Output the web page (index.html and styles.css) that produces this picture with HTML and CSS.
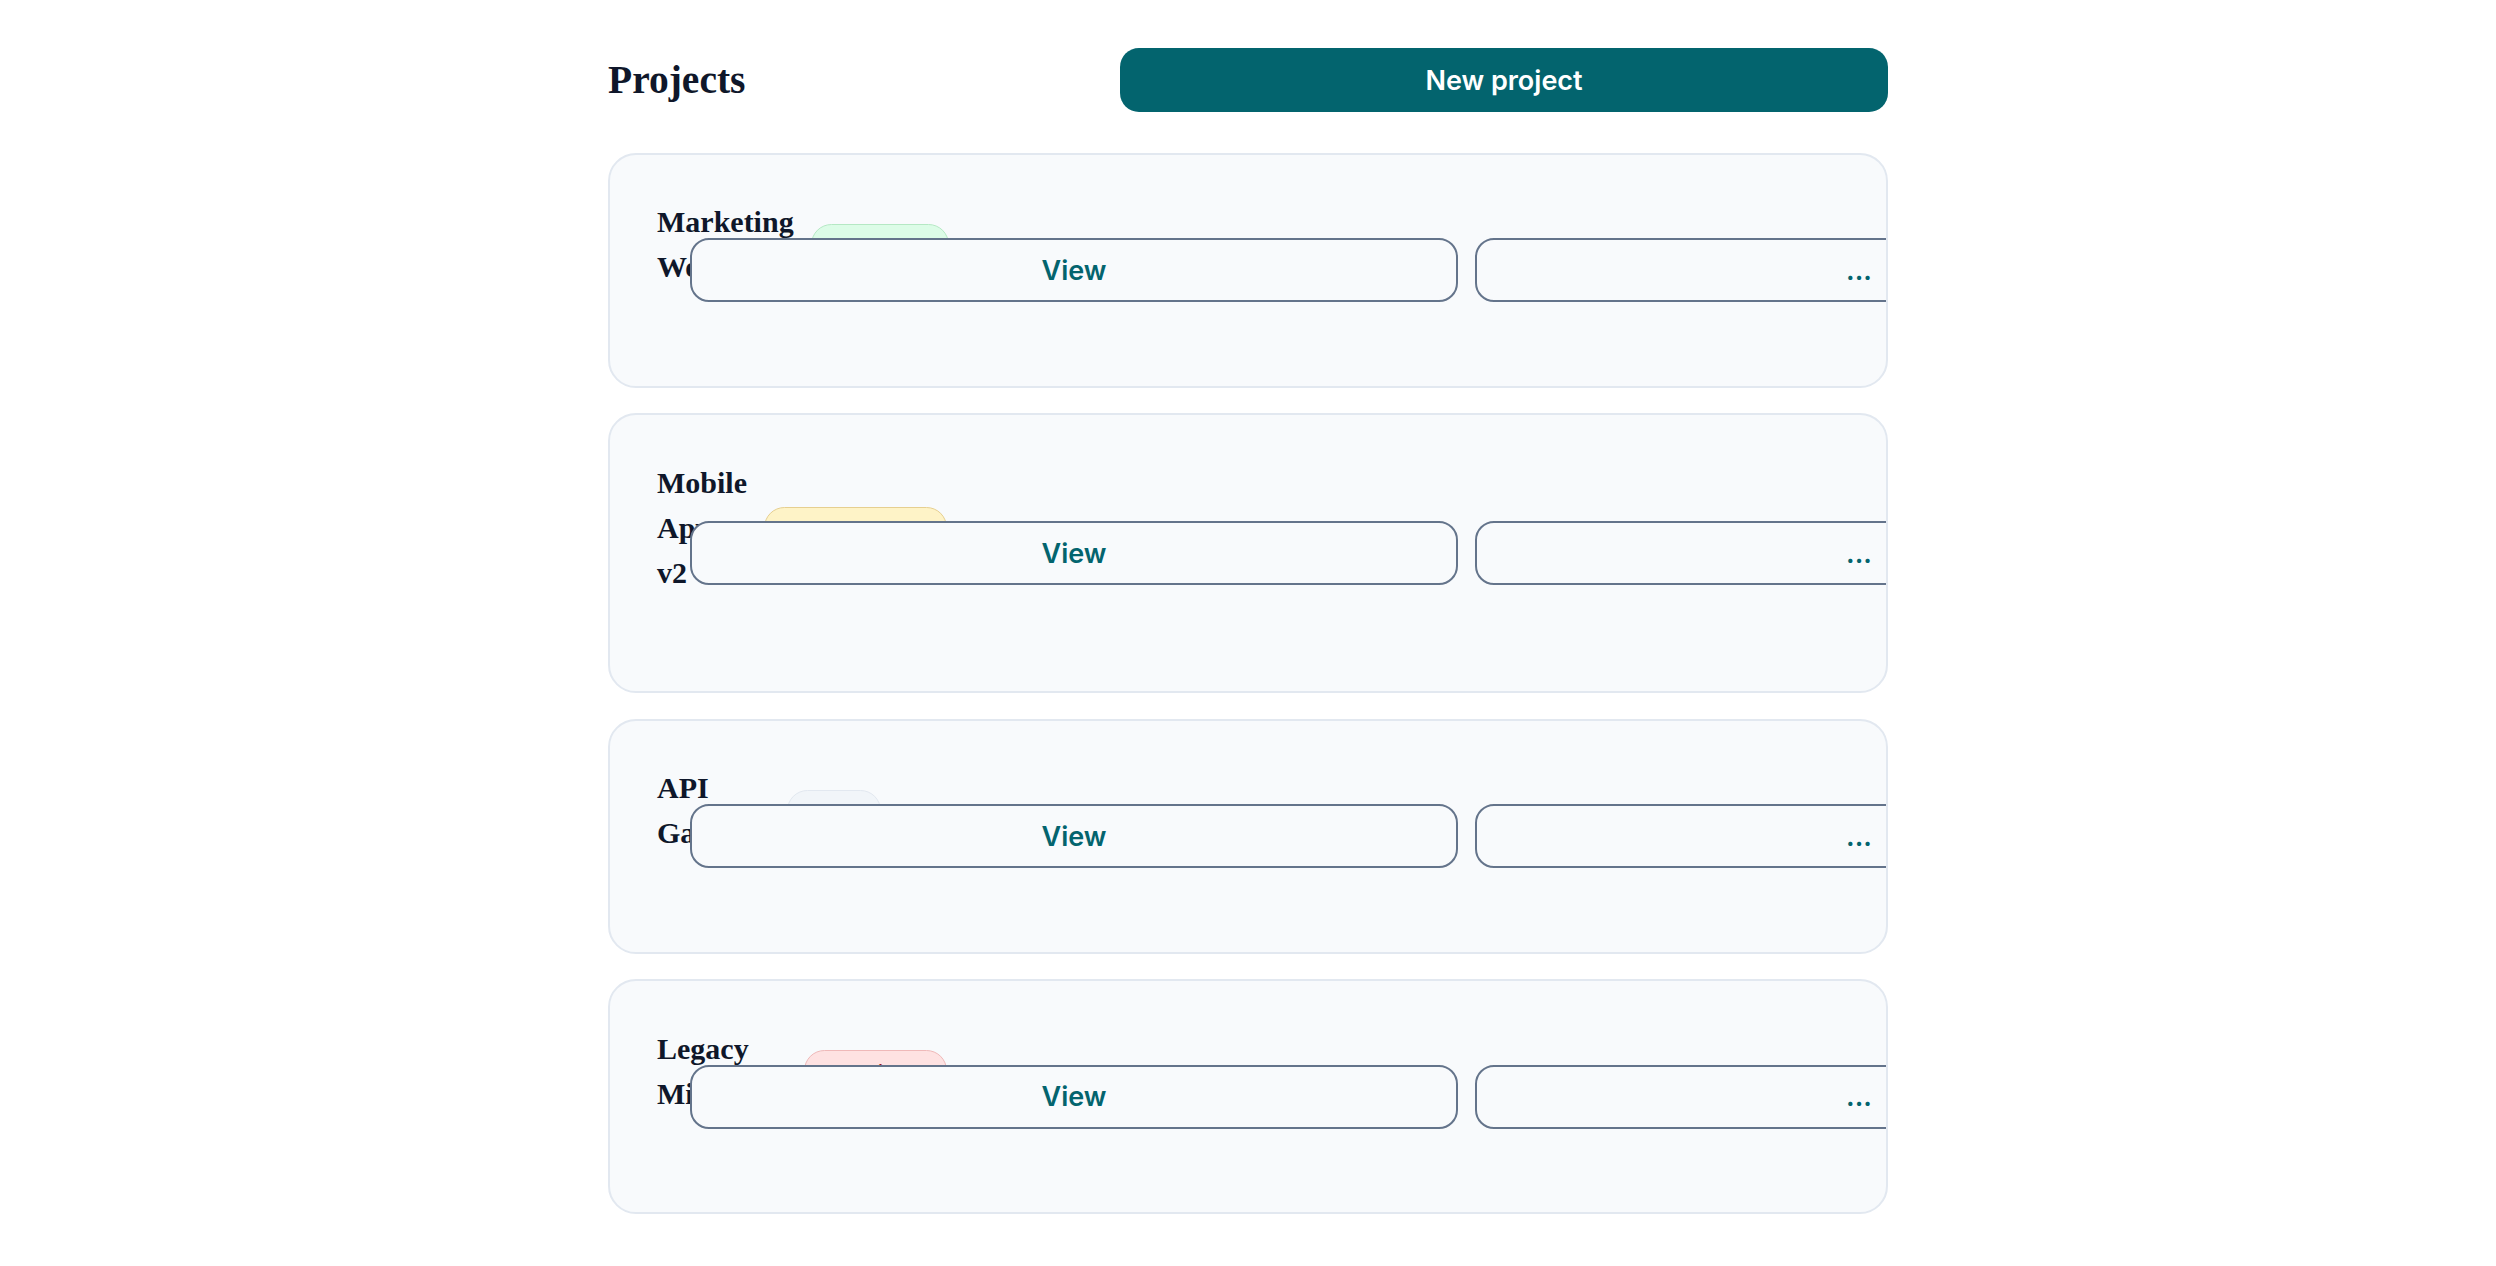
FILE: index.html
```html
<!DOCTYPE html>
<html lang="en">
<head>
<meta charset="utf-8">
<title>Projects</title>
<link rel="stylesheet" href="styles.css">
</head>
<body>
<main class="page">
  <header class="page-header">
    <h1 class="page-title">Projects</h1>
    <button class="btn-primary" type="button">New project</button>
  </header>

  <section class="project-list">
    <article class="card">
      <div class="info">
        <div class="title-row">
          <h3 class="card-title">Marketing Website</h3>
          <span class="badge badge-green">On track</span>
        </div>
        <div class="progress"><div class="progress-fill" style="width: 72%"></div></div>
      </div>
      <div class="actions">
        <button class="btn" type="button">View</button>
        <button class="btn" type="button">...</button>
      </div>
    </article>

    <article class="card">
      <div class="info">
        <div class="title-row">
          <h3 class="card-title">Mobile App v2</h3>
          <span class="badge badge-amber">Under review</span>
        </div>
        <div class="progress"><div class="progress-fill" style="width: 45%"></div></div>
      </div>
      <div class="actions">
        <button class="btn" type="button">View</button>
        <button class="btn" type="button">...</button>
      </div>
    </article>

    <article class="card">
      <div class="info">
        <div class="title-row">
          <h3 class="card-title">API Gateway</h3>
          <span class="badge badge-gray">Idle</span>
        </div>
        <div class="progress"><div class="progress-fill" style="width: 10%"></div></div>
      </div>
      <div class="actions">
        <button class="btn" type="button">View</button>
        <button class="btn" type="button">...</button>
      </div>
    </article>

    <article class="card">
      <div class="info">
        <div class="title-row">
          <h3 class="card-title">Legacy Migration</h3>
          <span class="badge badge-red">Archived</span>
        </div>
        <div class="progress"><div class="progress-fill" style="width: 90%"></div></div>
      </div>
      <div class="actions">
        <button class="btn" type="button">View</button>
        <button class="btn" type="button">...</button>
      </div>
    </article>
  </section>
</main>
</body>
</html>
```

FILE: styles.css
```css
html, body {
  margin: 0;
  padding: 0;
  background: #ffffff;
}

body {
  font-family: "Liberation Serif", "Times New Roman", serif;
  color: #0f172a;
}

.page {
  width: 1280px;
  margin: 0 auto;
  padding-top: 48px;
  box-sizing: border-box;
}

.page-header {
  display: flex;
  align-items: center;
  justify-content: space-between;
  margin-bottom: 41px;
}

.page-title {
  margin: 0;
  padding-top: 2px;
  font-family: "Liberation Serif", "Times New Roman", serif;
  font-weight: 700;
  font-size: 39.5px;
  line-height: 1.2;
  color: #0f172a;
}

.btn-primary {
  width: 768px;
  height: 64px;
  border: 0;
  border-radius: 19px;
  background: #03646e;
  color: #ffffff;
  font-family: Inter, "Noto Sans", sans-serif;
  font-weight: 600;
  font-size: 27px;
  cursor: pointer;
}

.project-list {
  display: flex;
  flex-direction: column;
  gap: 25.6px;
}

.card {
  display: flex;
  align-items: center;
  gap: 33px;
  padding: 44.4px 47px;
  background: #f8fafc;
  border: 2px solid #e2e8f0;
  border-radius: 28px;
  overflow: hidden;
}

.info {
  flex: 1 1 0;
  min-width: 0;
}

.title-row {
  display: flex;
  align-items: center;
  gap: 17px;
}

.card-title {
  margin: 0;
  font-family: "Liberation Serif", "Times New Roman", serif;
  font-weight: 700;
  font-size: 30px;
  line-height: 45px;
  color: #0f172a;
}

.badge {
  flex-shrink: 0;
  white-space: nowrap;
  height: 41px;
  box-sizing: border-box;
  padding: 3px 29px 0;
  border-radius: 999px;
  border: 1.5px solid;
  font-family: Inter, "Noto Sans", sans-serif;
  font-weight: 600;
  font-size: 19.2px;
  line-height: 36px;
}

.badge-green {
  background: #dcfce7;
  border-color: #b5e8c4;
  color: #166534;
}

.badge-amber {
  background: #fef3c7;
  border-color: #e6cf90;
  color: #92400e;
}

.badge-gray {
  background: #f1f5f9;
  border-color: #e2e8f0;
  color: #475569;
}

.badge-red {
  background: #fee2e2;
  border-color: #efb9b9;
  color: #991b1b;
}

.progress {
  margin-top: 40px;
  height: 12px;
  width: 100%;
  background: #e2e8f0;
  border-radius: 999px;
  overflow: hidden;
}

.progress-fill {
  height: 100%;
  background: #03646e;
}

.actions {
  display: flex;
  gap: 17px;
  flex-shrink: 0;
}

.btn {
  flex-shrink: 0;
  width: 768px;
  height: 64px;
  box-sizing: border-box;
  border: 2px solid #64748b;
  border-radius: 19px;
  background: #f8fafc;
  color: #03646e;
  font-family: Inter, "Noto Sans", sans-serif;
  font-weight: 600;
  font-size: 27px;
  cursor: pointer;
}
```
